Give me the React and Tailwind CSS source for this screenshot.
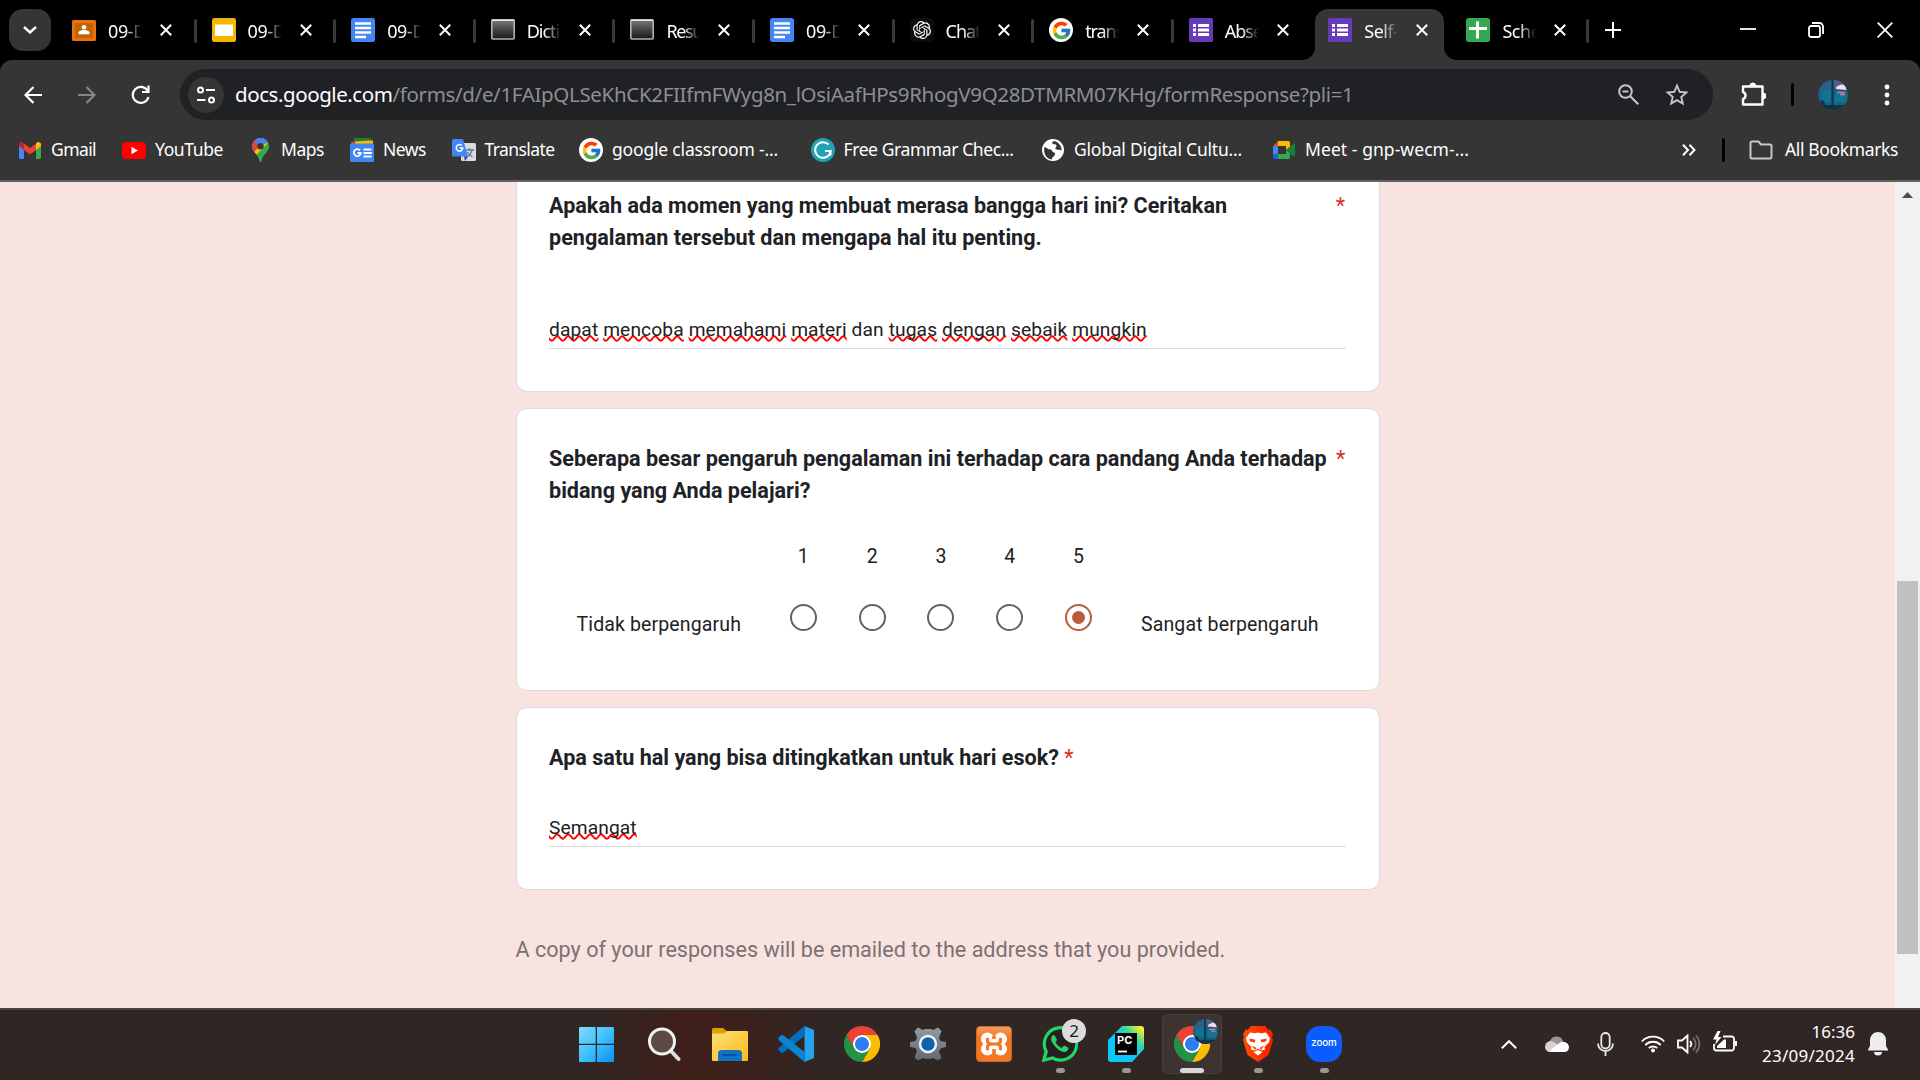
import React, { useLayoutEffect, useRef, useState } from 'react';
import { FcGoogle } from 'react-icons/fc';
import { SiOpenai } from 'react-icons/si';
import { MdStarBorder } from 'react-icons/md';

// Text set to a fixed advance width by spreading the difference over its letters.
function Fit({ w, children, className = '' }) {
  const ref = useRef(null);
  const [spacing, setSpacing] = useState(0);
  useLayoutEffect(() => {
    const natural = ref.current.getBoundingClientRect().width;
    setSpacing((w - natural) / ref.current.textContent.length);
  }, [w]);
  return (
    <span ref={ref} className={`inline-block whitespace-pre ${className}`} style={{ letterSpacing: `${spacing}px` }}>
      {children}
    </span>
  );
}

const CloseX = () => (
  <svg className="size-3 shrink-0" viewBox="0 0 12 12" stroke="#fff" strokeWidth="2" fill="none"><path d="M.8.8l10.4 10.4M11.2.8L.8 11.2" /></svg>
);

const Classroom = () => (
  <svg className="size-6" viewBox="0 0 24 24"><rect y="2" width="24" height="21" rx="1.5" fill="#e8710a" /><rect x="3" y="5" width="18" height="15" fill="#c26401" /><circle cx="12" cy="9.2" r="2.3" fill="#fff" /><path d="M6.5 16.2v-1.4c0-2 3.4-2.8 5.5-2.8s5.500.8 5.500 2.8v1.400z" fill="#fff" /></svg>
);
const Slides = () => (
  <svg className="size-6" viewBox="0 0 24 24"><rect width="24" height="24" rx="2.500" fill="#f4b400" /><rect x="3" y="6.500" width="18" height="11.500" fill="#fff" /></svg>
);
const Docs = () => (
  <svg className="size-6" viewBox="0 0 24 24"><rect width="24" height="24" rx="2.500" fill="#4285f4" /><path d="M4 5.500h16M4 10h16M4 14.500h16M4 19h11" stroke="#fff" strokeWidth="2.400" /></svg>
);
const Terminal = () => (
  <svg className="size-6" viewBox="0 0 24 24">
    <defs><linearGradient id="term" x1="0" y1="0" x2="0" y2="1"><stop offset="0" stopColor="#777" /><stop offset="1" stopColor="#171717" /></linearGradient></defs>
    <rect x=".8" y="1.800" width="22.400" height="19.200" rx="1" fill="url(#term)" stroke="#aeb4b4" strokeWidth="1.600" /><path d="M1 2.300h22" stroke="#e4e4e4" strokeWidth="1.500" />
  </svg>
);
const Chat = () => (
  <span className="flex size-6 items-center justify-center rounded bg-[#0d0d0d]"><SiOpenai className="size-[18px] text-white" /></span>
);
const GRound = () => (
  <span className="flex size-6 items-center justify-center rounded-full bg-white"><FcGoogle className="size-[21px]" /></span>
);
const Forms = () => (
  <svg className="size-6" viewBox="0 0 24 24"><rect width="24" height="24" rx="1.500" fill="#673ab7" /><path d="M4 7.500h3M9 7.500h11M4 12h3M9 12h11M4 16.500h3M9 16.500h11" stroke="#fff" strokeWidth="3" /></svg>
);
const Sheets = () => (
  <svg className="size-6" viewBox="0 0 24 24"><rect width="24" height="24" rx="2.500" fill="#34a853" /><path d="M11.500 3.500v17M3 10.500h18" stroke="#fff" strokeWidth="3" /></svg>
);

const tabs = [
  [Classroom, '09-D', 38], [Slides, '09-D', 38], [Docs, '09-D', 38], [Terminal, 'Dictio', 42], [Terminal, 'Resul', 39],
  [Docs, '09-D', 38], [Chat, 'Chat', 35], [GRound, 'trans', 38], [Forms, 'Abse', 37], [Forms, 'Self-', 34], [Sheets, 'Sche', 38],
];

function Tab({ icon: Icon, label, width, active, sep }) {
  return (
    <div className="relative h-[51px] w-[139.6px] shrink-0 pl-[15px] last-of-type:-ml-[1.500px] last-of-type:w-[138px]">
      {active && (
        <svg className="absolute left-[-11px] top-0 h-[51px] w-[153px]" viewBox="0 0 153 51"><path d="M0 51a13 13 0 0 0 13-13V13a13 13 0 0 1 13-13h103a13 13 0 0 1 13 13v25a13 13 0 0 0 13 13z" fill="#353535" /></svg>
      )}
      <span className="relative flex h-[42px] w-full items-center">
        <span className="size-6 shrink-0"><Icon /></span>
        <span className="ml-3 mt-[2px] w-[34px] overflow-hidden text-[18px] leading-[26px] text-white [mask-image:linear-gradient(to_right,#000_50%,transparent_100%)]"><Fit w={width}>{label}</Fit></span>
        <span className="ml-[18px] flex"><CloseX /></span>
      </span>
      {sep && <span className="absolute right-0 top-[10px] h-6 w-[3px] rounded bg-[#3a3a3a]" />}
    </div>
  );
}

const Gmail = () => (
  <svg className="h-[17px] w-[22px]" viewBox="0 0 22 17"><path d="M0 2.500V15.500A1.500 1.500 0 0 0 1.500 17H5V6z" fill="#4285f4" /><path d="M22 2.500V15.500a1.500 1.500 0 0 1-1.500 1.500H17V6z" fill="#34a853" /><path d="M17 1.500V8l5-3.700V2.500c0-2-2.300-3.100-4-1.900z" fill="#fbbc04" /><path d="M5 8V1.500l6 4.500 6-4.500V8l-6 4.500z" fill="#ea4335" /><path d="M0 2.500v1.800L5 8V1.500L4 .6C2.300-.6 0 .5 0 2.500z" fill="#c5221f" /></svg>
);
const YouTube = () => (
  <svg className="h-[17px] w-6" viewBox="0 0 24 17"><rect width="24" height="17" rx="4" fill="#f00" /><path d="M9.500 4.800v7.400l6.400-3.700z" fill="#fff" /></svg>
);
const Maps = () => (
  <svg className="h-6 w-[17px]" viewBox="0 0 17 24">
    <defs><clipPath id="pin"><path d="M8.500 0A8.500 8.500 0 0 0 0 8.500C0 14 6.500 16 7.700 23.300c.2 1 1.400 1 1.600 0C10.500 16 17 14 17 8.500A8.500 8.500 0 0 0 8.500 0z" /></clipPath></defs>
    <g clipPath="url(#pin)"><rect width="17" height="24" fill="#34a853" /><path d="M0 0h17v4L8.500 8.500 0 16z" fill="#4285f4" /><path d="M0 0l8.500 8.500L1.500 15H0z" fill="#ea4335" /><path d="M3 0l5.500 8L17 3V0z" fill="#4285f4" /><path d="M17 4L3 19l-2-4 7-7z" fill="#fbbc04" /><path d="M17 5v19H4l0-7z" fill="#34a853" /></g><circle cx="8.500" cy="8.300" r="3.200" fill="#353535" />
  </svg>
);
const News = () => (
  <svg className="size-6" viewBox="0 0 24 24"><path d="M4 0h17v8H4z" fill="#188038" /><path d="M1 4l18-2 1 8H2z" fill="#ea4335" /><path d="M5 3.500l18-1v8H6z" fill="#fbbc04" /><rect y="5.500" width="24" height="18.500" rx="1.500" fill="#4285f4" /><path d="M10 12.300a3.500 3.500 0 1 0 .8 2.700H7.500M13.500 11.500h8M13.500 15h8.500M13.500 18.500h8" fill="none" stroke="#fff" strokeWidth="1.800" /></svg>
);
const Translate = () => (
  <svg className="size-6" viewBox="0 0 24 24"><rect x="9" y="5" width="15" height="18" rx="1.500" fill="#dadce0" /><path d="M13 12h9M17.500 10v2M20 12c-1 4-3 6-6 7M15.500 14c1 2 3 4 5 5" fill="none" stroke="#607d8b" strokeWidth="1.300" /><path d="M1.500 1H11l5 17.500H1.500A1.500 1.500 0 0 1 0 17V2.500A1.500 1.500 0 0 1 1.500 1z" fill="#4285f4" /><path d="M12 18.500h4.200L13 23z" fill="#3049bf" /><path d="M9.800 7.500A3.300 3.300 0 1 0 10.800 10H7.500" fill="none" stroke="#fff" strokeWidth="1.500" /></svg>
);
const Grammar = () => (
  <svg className="size-6" viewBox="0 0 24 24"><circle cx="12" cy="12" r="12" fill="#1fa3b5" /><path d="M17.500 6.500A7.800 7.800 0 1 0 19.700 13H14M19.500 12.500v5" fill="none" stroke="#fff" strokeWidth="2" /></svg>
);
const Globe = () => (
  <svg className="size-[22px]" viewBox="0 0 22 22"><circle cx="11" cy="11" r="11" fill="#fff" /><path d="M2.500 8c2 .5 3.500 2.500 6 2.500 2 0 1 2.500 3.500 3 2 .5 1 3-1 4.500-1 1-1 2-1.500 2.500C4 19.500 1 14 2.500 8zM12 2c-2 1-2.500 2-1 3s3-.3 3.500 1.500S12 9 14 10.200s4 .3 5.500 1.300c.500-4-2.500-8.500-7.500-9.500z" fill="#353535" /></svg>
);
const Meet = () => (
  <svg className="h-[18px] w-[22px]" viewBox="0 0 22 18"><path d="M0 5L5 0v5z" fill="#ea4335" /><path d="M0 5h5v8H0z" fill="#4285f4" /><path d="M0 13h5v5H1.500A1.500 1.500 0 0 1 0 16.500z" fill="#1967d2" /><path d="M5 0h10.500A1.500 1.500 0 0 1 17 1.500V6l-4 3V5H5z" fill="#fbbc04" /><path d="M5 18h10.500a1.500 1.500 0 0 0 1.500-1.500V12l-4-3v4H5z" fill="#34a853" /><path d="M13 9l7.500-6.500c.6-.5 1.500 0 1.500.7v11.600c0 .7-.9 1.200-1.500.7z" fill="#188038" /></svg>
);

const bookmarks = [
  [Gmail, 'w-[32px]', 'Gmail', 45, 'w-[71px]'], [YouTube, 'w-[33px]', 'YouTube', 68, 'w-[97px]'],
  [Maps, 'w-[29px]', 'Maps', 43, 'w-[69px]'], [News, 'w-[33px]', 'News', 43, 'w-[69px]'],
  [Translate, 'w-[32.500px]', 'Translate', 70, 'w-[94.500px]'], [GRound, 'w-[33px]', 'google classroom -...', 166, 'w-[199px]'],
  [Grammar, 'w-[32.500px]', 'Free Grammar Chec...', 170, 'w-[198.500px]'], [Globe, 'w-[32px]', 'Global Digital Cultu...', 168, 'w-[199px]'],
  [Meet, 'w-[32px]', 'Meet - gnp-wecm-...', 164, 'w-[164px]'],
];

// Round harbour-at-dusk profile photo.
const Avatar = ({ className, id }) => (
  <svg className={className} viewBox="0 0 30 30">
    <defs><clipPath id={id}><circle cx="15" cy="15" r="15" /></clipPath></defs>
    <g clipPath={`url(#${id})`}><rect width="30" height="30" fill="#17627f" /><path d="M0 0h14v10H0z" fill="#2d5f80" /><path d="M3 10h10v12H3zM17 14h12v8H17z" fill="#137394" /><path d="M16 0h14v8H16z" fill="#4f5f88" /><path d="M18 9c0-3 2-3 4-4 3-1 5 0 6 2l.5 3z" fill="#f7dcec" /><path d="M19 12.500h8M22 14.500h5" stroke="#d17aa9" strokeWidth="1.400" /><path d="M14.500 0v27" stroke="#0d3450" strokeWidth="2" /><path d="M0 25h30v5H0zM3 20l3 1 2 7H2z" fill="#12304a" /></g>
  </svg>
);

function BrowserTop() {
  return (
    <header className="h-[182px] bg-black font-['Noto_Sans','Open_Sans',sans-serif]">
      <div className="flex h-[60px] items-start pl-[9px] pt-[9px]">
        <span className="mr-[6px] flex size-[42px] items-center justify-center rounded-[14px] bg-[#353535]">
          <svg className="h-2 w-[14px]" viewBox="0 0 14 8" fill="none" stroke="#fff" strokeWidth="2.400"><path d="M1 1l6 5.500L13 1" /></svg>
        </span>
        {tabs.map(([icon, label, width], i) => (
          <Tab key={i} icon={icon} label={label} width={width} active={i === 9} sep={i < 8 || i === 10} />
        ))}
        <svg className="ml-[16px] mt-[13px] size-4" viewBox="0 0 16 16" stroke="#fff" strokeWidth="2"><path d="M8 0v16M0 8h16" /></svg>
        <svg className="ml-[119px] mt-[13px] h-4 w-4" viewBox="0 0 16 16" stroke="#fff" strokeWidth="1.800"><path d="M0 7h16" /></svg>
        <svg className="ml-[52px] mt-[13px] h-4 w-4" viewBox="0 0 16 16" stroke="#fff" strokeWidth="1.800" fill="none"><rect x="1" y="4" width="11" height="11" rx="2" /><path d="M4 1h7.500A3.500 3.500 0 0 1 15 4.500V12" /></svg>
        <svg className="ml-[53px] mt-[13px] h-4 w-4" viewBox="0 0 16 16" stroke="#fff" strokeWidth="1.800"><path d="M.7.7l14.600 14.600M15.300.7L.7 15.300" /></svg>
      </div>
      <div className="h-[122px] rounded-t-[12px] border-b-2 border-[#636363] bg-[#353535] pt-[9px]">
        <div className="flex h-[51px] items-center">
          <svg className="ml-6 size-[18px]" viewBox="0 0 18 18" fill="none" stroke="#fff" strokeWidth="2.200"><path d="M18 9H2M9.500 1L1.500 9l8 8" /></svg>
          <svg className="ml-9 size-[18px]" viewBox="0 0 18 18" fill="none" stroke="#868686" strokeWidth="2.200"><path d="M0 9h16M8.500 1l8 8-8 8" /></svg>
          <svg className="ml-[35px] size-[19px]" viewBox="0 0 19 19" fill="none" stroke="#fff" strokeWidth="2.200"><path d="M16.500 5.500A8 8 0 1 0 17.500 12M17.500 .5v6.500H11" /></svg>
          <div className="ml-[30px] flex h-[51px] w-[1533px] items-center rounded-full bg-[#202124] pl-2">
            <span className="flex size-9 items-center justify-center rounded-full bg-[#353535]">
              <svg className="size-[18px]" viewBox="0 0 18 18" fill="none" stroke="#fff" strokeWidth="2"><circle cx="3.500" cy="4" r="2.500" /><path d="M9 4h9M0 14h8.500" /><circle cx="14.500" cy="14" r="2.500" /></svg>
            </span>
            <div className="ml-[11px] flex w-[1117px] text-[20.500px] text-[#8d8f92]"><Fit w={157.5} className="text-white">docs.google.com</Fit><Fit w={961}>/forms/d/e/1FAIpQLSeKhCK2FIIfmFWyg8n_lOsiAafHPs9RhogV9Q28DTMRM07KHg/formResponse?pli=1</Fit></div>
            <svg className="ml-[266px] size-[21px]" viewBox="0 0 21 21" fill="none" stroke="#c7c7c7" strokeWidth="2"><circle cx="7.500" cy="7.500" r="6.300" /><path d="M12 12l8.300 8.300M4.500 7.500h6" /></svg>
            <MdStarBorder className="ml-[24px] size-[28px] text-[#c7c7c7]" />
          </div>
          <svg className="ml-[28px] size-[25px]" viewBox="0 0 25 25" fill="none" stroke="#fff" strokeWidth="2.400" strokeLinejoin="round"><path d="M2 4.500h19.500V22.500H2v-5.500a3.700 3.700 0 0 0 0-7z" /><path d="M8.800 4a3 3 0 0 1 6 0M22 11a3 3 0 0 1 0 6" fill="#fff" strokeWidth="1" /></svg>
          <span className="ml-[25px] h-[23px] w-[3px] rounded bg-black" />
          <Avatar id="av1" className="ml-6 size-[30px]" />
          <svg className="ml-[36px] h-[22px] w-[6px]" viewBox="0 0 6 22" fill="#fff"><circle cx="3" cy="3" r="2.400" /><circle cx="3" cy="11" r="2.400" /><circle cx="3" cy="19" r="2.400" /></svg>
        </div>
        <div className="flex h-[60px] items-center pl-[19px] text-[17.500px] text-white">
          {bookmarks.map(([Icon, iw, label, w, tw]) => (
            <div key={label} className="flex shrink-0 items-center">
              <span className={`${iw} shrink-0`}><Icon /></span>
              <span className={`${tw} mb-[2px] shrink-0`}><Fit w={w}>{label}</Fit></span>
            </div>
          ))}
          <svg className="ml-auto mr-[26px] h-3 w-[14px]" viewBox="0 0 14 12" fill="none" stroke="#fff" strokeWidth="2"><path d="M1 .7L6 6l-5 5.300M7.500 .7l5 5.300-5 5.300" /></svg>
          <span className="mr-[24px] h-6 w-[3px] rounded bg-black" />
          <svg className="mr-3 h-5 w-6" viewBox="0 0 24 20" fill="none" stroke="#c7c7c7" strokeWidth="2" strokeLinejoin="round"><path d="M1.500 3a1.500 1.500 0 0 1 1.500-1.500h6.500l2.500 3h9a1.500 1.500 0 0 1 1.500 1.500v11a1.500 1.500 0 0 1-1.500 1.500H3A1.500 1.500 0 0 1 1.500 17z" /></svg>
          <span className="mb-[2px] mr-[22px] w-[113px]"><Fit w={113}>All Bookmarks</Fit></span>
        </div>
      </div>
    </header>
  );
}

// Word carrying the red spell-check squiggle.
const Sp = ({ children }) => (
  <span className="underline decoration-[#ff0000] decoration-wavy decoration-[1.500px] underline-offset-[-1px] [text-decoration-skip-ink:none]">{children}</span>
);
const Star = ({ className = '' }) => <span className={`font-normal text-[#d93025] ${className}`}>*</span>;
const card = 'w-[864px] rounded-[11px] border border-[#dadce0] bg-white px-[32px]';
const heading = 'text-[21.600px] font-bold leading-8';

function Page() {
  return (
    <main className="flex h-[826px] overflow-hidden bg-[#f8e3e1] font-[Roboto,sans-serif] text-[#202124]">
      <div className="w-[1895px] pl-[516px]">
        <section className={`${card} h-[210px] rounded-t-none border-t-0 pt-2`}>
          <div className={`flex justify-between ${heading}`}>
            <h2 className="w-[780px] shrink-0">Apakah ada momen yang membuat merasa bangga hari ini? Ceritakan pengalaman tersebut dan mengapa hal itu penting.</h2>
            <Star className="mr-[2px]" />
          </div>
          <div className="mt-[62px] h-[33px] w-[797px] border-b border-[#dadce0] text-[19.200px] leading-[27px] tracking-[0.110px]">
            <p className="whitespace-nowrap"><Sp>dapat</Sp> <Sp>mencoba</Sp> <Sp>memahami</Sp> <Sp>materi</Sp> dan <Sp>tugas</Sp> <Sp>dengan</Sp> <Sp>sebaik</Sp> <Sp>mungkin</Sp></p>
          </div>
        </section>
        <section className={`${card} mt-4 h-[283px] pt-[34px]`}>
          <div className={`flex justify-between ${heading}`}>
            <h2 className="w-[787px] shrink-0">Seberapa besar pengaruh pengalaman ini terhadap cara pandang Anda terhadap bidang yang Anda pelajari?</h2>
            <Star className="mr-[2px]" />
          </div>
          <div className="mt-[27px] flex text-[19.500px] leading-[27px] tracking-[0.130px]">
            <span className="w-[220px] pl-[27.500px] pt-[77px]">Tidak berpengaruh</span>
            {[1, 2, 3, 4, 5].map((n) => (
              <div key={n} className="flex w-[68.800px] flex-col items-center pt-[9px]">
                <span>{n}</span>
                {n === 5 ? (
                  <span className="mt-[34px] flex size-[27px] items-center justify-center rounded-full border-[2.700px] border-[#b85c3f]"><span className="size-[13px] rounded-full bg-[#b85c3f]" /></span>
                ) : (
                  <span className="mt-[34px] size-[27px] rounded-full border-[2.700px] border-[#5f6368]" />
                )}
              </div>
            ))}
            <span className="whitespace-nowrap pl-[28px] pt-[77px]">Sangat berpengaruh</span>
          </div>
        </section>
        <section className={`${card} mt-4 h-[183px] pt-[34px]`}>
          <h2 className={heading}>Apa satu hal yang bisa ditingkatkan untuk hari esok? <Star /></h2>
          <div className="mt-[40px] h-[33px] w-[797px] border-b border-[#dadce0] text-[19.200px] leading-[27px] tracking-[0.100px]"><Sp>Semangat</Sp></div>
        </section>
        <p className="-ml-[0.500px] mt-[44px] text-[21.600px] leading-8 text-[#7c7171]">A copy of your responses will be emailed to the address that you provided.</p>
      </div>
      <div className="flex w-[25px] flex-col items-center bg-[#f1f1f1] pt-[10px]">
        <svg className="h-[6px] w-[11px]" viewBox="0 0 11 6"><path d="M0 6L5.500 0 11 6z" fill="#505050" /></svg>
        <span className="mt-[383px] h-[373px] w-[21px] bg-[#c1c1c1]" />
      </div>
    </main>
  );
}

const Chrome = () => (
  <svg className="size-9" viewBox="0 0 36 36"><path d="M2.400 9A18 18 0 0 1 33.600 9H18L10.200 22.500z" fill="#ea4335" /><path d="M33.600 9A18 18 0 0 1 18 36l7.800-13.500L18 9z" fill="#fbbc04" /><path d="M2.400 9A18 18 0 0 0 18 36l7.800-13.500H10.200z" fill="#249144" /><circle cx="18" cy="18" r="9" fill="#fff" /><circle cx="18" cy="18" r="7" fill="#2f7bf0" /></svg>
);
const Windows = () => (
  <svg className="size-[35px]" viewBox="0 0 35 35"><defs><linearGradient id="win" x1="0" y1="0" x2="1" y2="1"><stop offset="0" stopColor="#83dcfb" /><stop offset=".5" stopColor="#3cc2fc" /><stop offset="1" stopColor="#0c8ff5" /></linearGradient></defs><path d="M1 0h15.700v16.700H0V1a1 1 0 0 1 1-1zM18 0h16a1 1 0 0 1 1 1v15.700H18zM0 18h16.700v17H1a1 1 0 0 1-1-1zM18 18h17v16a1 1 0 0 1-1 1H18z" fill="url(#win)" /></svg>
);
const Search = () => (
  <svg className="size-9" viewBox="0 0 36 36"><path d="M24 24l8.500 9" stroke="#d9dde0" strokeWidth="4" strokeLinecap="round" /><circle cx="16" cy="15.500" r="12.500" fill="#5d4a46" stroke="#eff1f2" strokeWidth="3" /></svg>
);
const Folder = () => (
  <svg className="size-9" viewBox="0 0 36 36"><defs><linearGradient id="fold" x1="0" y1="0" x2="1" y2="1"><stop offset="0" stopColor="#ffdf70" /><stop offset="1" stopColor="#f9bc1c" /></linearGradient></defs><path d="M0 3.500A1.500 1.500 0 0 1 1.500 2H11l4 3.500V10H0z" fill="#dca000" /><path d="M0 7.500h12L15 5h20a1 1 0 0 1 1 1v28a1 1 0 0 1-1 1H1a1 1 0 0 1-1-1z" fill="url(#fold)" /><path d="M6 35v-7.500A3.500 3.500 0 0 1 9.500 24h17a3.500 3.500 0 0 1 3.500 3.500V35z" fill="#0f72c6" /><path d="M11 29h14" stroke="#0a4a8a" strokeWidth="1.500" strokeLinecap="round" /></svg>
);
const Code = () => (
  <svg className="size-9" viewBox="0 0 36 36"><path d="M26.500 36L36 32V4L26.500 0z" fill="#24a4f0" /><path d="M26.500 0v10L5.500 26.500 3.500 27 .5 24.500V22z" fill="#0070bd" /><path d="M3.500 9L.5 11.500V14l26 22V26L5.500 9.500z" fill="#0b84d4" /></svg>
);
const Gear = () => (
  <svg className="size-9" viewBox="0 0 36 36"><defs><linearGradient id="gear" x1="0" y1="0" x2="0" y2="1"><stop offset="0" stopColor="#929aa2" /><stop offset="1" stopColor="#5f6974" /></linearGradient></defs><path d="M8 1.500l5 2.500 2-1h6l2 1 5-2.500 3.500 3.500-2.500 7 1.500 3 5.500 1v5l-5.500 1.500-1.500 3 2.500 6.500L28 34.500 23 32l-2 1h-6l-2-1-5 2.500L4.500 31.500l2.500-6.500-1.500-3L0 21v-5l5.500-1 1.500-3-2.500-7z" fill="url(#gear)" /><circle cx="18" cy="18" r="8" fill="#0f62b2" stroke="#f0f3f5" strokeWidth="2.500" /></svg>
);
const Xampp = () => (
  <span className="flex size-9 items-center justify-center rounded-[4px] border border-[#c9692c] bg-linear-to-b from-[#f39a60] to-[#f57622] to-30%">
    <svg className="h-[24px] w-[28px]" viewBox="0 0 28 24"><g fill="#fff"><circle cx="7.500" cy="7" r="6.500" /><circle cx="20.500" cy="7" r="6.500" /><circle cx="7.500" cy="17" r="6.500" /><circle cx="20.500" cy="17" r="6.500" /><path d="M9 5h10v14H9z" /></g><path d="M7.500 7v1.500Q7.500 12 12 12h4q4.500 0 4.500-3.500V7M7.500 17v-1.500Q7.500 12 12 12h4q4.500 0 4.500 3.500V17" fill="none" stroke="#f57622" strokeWidth="3.200" strokeLinecap="round" /><path d="M12.200 4h3.600v3h-3.600zM12.200 17h3.600v4h-3.600z" fill="#f57622" /></svg>
  </span>
);
const WhatsApp = () => (
  <span className="relative block size-9">
    <svg className="size-9" viewBox="0 0 36 36"><path d="M1.800 34.200l2.400-8.700A16.200 16.200 0 1 1 10.500 32z" fill="#262120" stroke="#25d366" strokeWidth="3.200" /><path d="M13 10c-1-1.500-2-1-3 .3-1.500 2-1 4.500 1 7.500 3 4.500 6.500 7.500 10.500 8.200 2.500.3 4.500-1 5-3.500.1-.7 0-1-4.500-3l-2.300 2.400c-3-1.200-5-3.200-6.200-5.600l1.500-2.300z" fill="#25d366" /></svg>
    <span className="absolute -top-[7px] left-5 flex size-6 items-center justify-center rounded-full bg-[#dcdcdc] text-[17px] leading-6 text-[#1b1b1b]">2</span>
  </span>
);
const PyCharm = () => (
  <svg className="size-9" viewBox="0 0 36 36"><defs><linearGradient id="pyc" x1="0" y1="1" x2="1" y2="0"><stop offset=".48" stopColor="#0ac8f8" /><stop offset=".7" stopColor="#35d5a8" /><stop offset=".92" stopColor="#f5f02a" /></linearGradient></defs><path d="M14 0h19a3 3 0 0 1 3 3v20L24 36H3a3 3 0 0 1-3-3V14z" fill="url(#pyc)" /><rect x="7" y="7" width="22" height="22" fill="#000" /><text x="9" y="18" fontSize="11" fontWeight="700" fill="#fff" fontFamily="Inter, sans-serif">PC</text><path d="M10 25.500h9" stroke="#fff" strokeWidth="1.800" /></svg>
);
const Brave = () => (
  <svg className="size-9" viewBox="0 0 36 36"><defs><linearGradient id="brv"><stop offset="0" stopColor="#ff5000" /><stop offset="1" stopColor="#fb1a00" /></linearGradient></defs><path d="M11 0h14l3.500 4 2-.5 2.500 5-1 2.500 1 3-4.500 15L18 36 7.500 29 3 14l1-3-1-2.500 2.500-5 2 .5z" fill="url(#brv)" /><path d="M10 6.500l5 .8 3-.8 3 .8 5-.8 4 5.500-.8 4-4.700 5 .5 2.500-3 1-4-1.800-4 1.800-3-1 .5-2.500-4.700-5L6 12z" fill="#fff" /><path d="M9.500 12.500l6 1.200-.8 2.800-5-1.300zM26.500 12.500l-6 1.200.8 2.800 5-1.300zM12 19.500l4.500 2.500-2 1.800zM24 19.500L19.500 22l2 1.800z" fill="#fb3a00" /><path d="M13.500 26l4.500-2 4.500 2-4.500 3.500z" fill="#fff" /></svg>
);
const Zoom = () => (
  <span className="flex size-9 items-center justify-center rounded-[14px] bg-[#0b5cff] pb-px font-[Inter,sans-serif] text-[9.800px] font-medium tracking-[-0.1px] text-white">zoom</span>
);
const ActiveChrome = () => (
  <span className="relative block size-9"><Chrome /><Avatar id="av2" className="absolute -top-[7px] left-[19px] size-[25px]" /></span>
);

const apps = [[Windows], [Search], [Folder], [Code], [Chrome], [Gear], [Xampp], [WhatsApp, 'dot'], [PyCharm, 'dot'], [ActiveChrome, 'bar'], [Brave, 'dot'], [Zoom, 'dot']];

function Taskbar() {
  return (
    <footer className="flex h-[72px] items-start border-t-2 border-[#4b4442] bg-[#302624] bg-[linear-gradient(to_right,transparent_590px,#3e1f19_680px,#3e1f19_720px,transparent_830px)] font-['Noto_Sans','Open_Sans',sans-serif] text-white">
      <div className="ml-[563px] flex pt-1">
        {apps.map(([Icon, mark], i) => (
          <div key={i} className="flex w-[66px] justify-center first:mr-[2px]">
            <div className={`flex h-[60px] w-[60px] flex-col items-center rounded-[6px] border pt-[11px] ${mark === 'bar' ? 'border-[#4a403e] bg-[#3d3331]' : 'border-transparent'}`}>
              <span className="flex h-9 items-center"><Icon /></span>
              {mark === 'dot' && <span className="mt-[6px] h-[5px] w-[9px] rounded-full bg-[#9b9594]" />}
              {mark === 'bar' && <span className="mt-[6px] h-[5px] w-6 rounded-full bg-[#d8d6d6]" />}
            </div>
          </div>
        ))}
      </div>
      <div className="ml-36 flex h-[68px] items-center">
        <svg className="h-[9px] w-4" viewBox="0 0 16 9" fill="none" stroke="#fff" strokeWidth="2"><path d="M.8 8.200L8 1.200l7.200 7" /></svg>
        <svg className="ml-7 h-4 w-6" viewBox="0 0 24 16"><path d="M5 5a7 7 0 0 1 13 0l-5 5z" fill="#9a9695" /><path d="M0 10.500A5.500 5.500 0 0 1 8.500 6L17 11 5 16C2 16 0 13.500 0 10.500z" fill="#d6d4d3" /><path d="M9 11l7-5c4-1 8 1.500 8 5.500 0 2.500-2 4.500-4.500 4.500H4z" fill="#fff" /></svg>
        <svg className="ml-7 h-6 w-[17px]" viewBox="0 0 17 24" fill="none" stroke="#e8e8e8" strokeWidth="1.800"><rect x="4.300" y="1" width="8.400" height="15.500" rx="4.200" /><path d="M1 11.500a7.500 7.500 0 0 0 15 0M8.500 19.500V24" /></svg>
        <svg className="ml-[27px] h-[18px] w-6" viewBox="0 0 24 18" fill="none" stroke="#fff" strokeWidth="1.800"><path d="M.8 6.500a15.500 15.500 0 0 1 22.400 0M4.300 10a10.800 10.800 0 0 1 15.400 0M7.800 13.200a6 6 0 0 1 8.400 0" /><circle cx="12" cy="15.500" r="2" fill="#fff" stroke="none" /></svg>
        <svg className="ml-3 h-5 w-6" viewBox="0 0 24 20" fill="none" stroke="#fff" strokeWidth="1.800"><path d="M1 6.500h4L10.500 1.500v17L5 13.500H1z" /><path d="M13 7a4.500 4.500 0 0 1 0 6" /><path d="M16 4a8 8 0 0 1 0 12M19 1.500a12.500 12.500 0 0 1 0 17" stroke="#746d6b" /></svg>
        <svg className="ml-3 h-[22px] w-6 -translate-y-[2px]" viewBox="0 0 24 22" fill="none" stroke="#fff" strokeWidth="1.800"><path d="M10 5.500h8.500a2.500 2.500 0 0 1 2.500 2.500v9a2.500 2.500 0 0 1-2.500 2.500H3.500A2.500 2.500 0 0 1 1 17v-4" /><path d="M22 10v5h2v-5z" fill="#fff" stroke="none" /><path d="M4.500 0L0 8.500h3.500L2 14l6.500-8H5L7.500 0zM11 8.500h2V17H4v-2z" fill="#fff" stroke="none" /></svg>
        <div className="ml-6 flex w-[94px] flex-col items-end text-[17px] leading-6"><Fit w={43.5}>16:36</Fit><Fit w={93}>23/09/2024</Fit></div>
        <svg className="ml-[13px] h-6 w-5" viewBox="0 0 20 24" fill="#eee"><path d="M2 8a8 8 0 0 1 16 0v6l2 3.500v1H0v-1L2 14zM6 20h8a4 3.500 0 0 1-8 0z" /></svg>
      </div>
    </footer>
  );
}

export default function App() {
  return (
    <div className="flex h-[1080px] w-[1920px] flex-col overflow-hidden">
      <BrowserTop />
      <Page />
      <Taskbar />
    </div>
  );
}
